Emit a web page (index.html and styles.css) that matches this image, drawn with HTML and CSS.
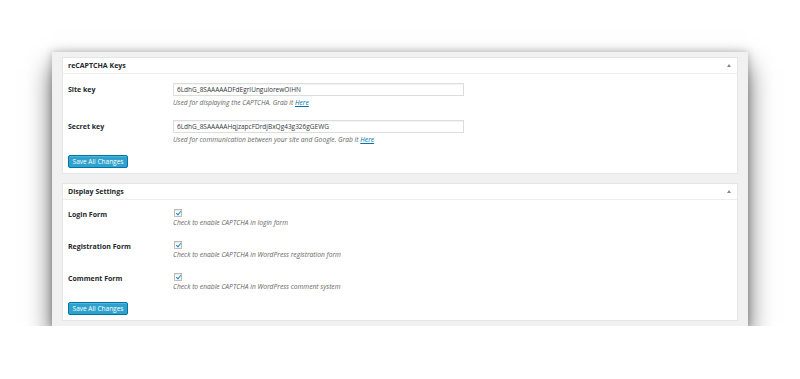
FILE: index.html
```html
<!DOCTYPE html>
<html>
<head>
    <title>reCAPTCHA Settings</title>
    <link rel="stylesheet" href="styles.css">
</head>
<body>
    <div class="wrap">
        <div class="postbox">
            <div class="postbox-header">
                <h3>reCAPTCHA Keys</h3>
                <span class="toggle"></span>
            </div>
            <div class="inside">
                <div class="row">
                    <div class="label">Site key</div>
                    <div class="field">
                        <input type="text" class="text-input" value="6LdhG_8SAAAAADFdEgrIUnguiorewOIHN">
                        <p class="description">Used for displaying the CAPTCHA. Grab it <a href="#">Here</a></p>
                    </div>
                </div>
                <div class="row">
                    <div class="label">Secret key</div>
                    <div class="field">
                        <input type="text" class="text-input" value="6LdhG_8SAAAAAHqjzapcFDrdjBxQg43g326gGEWG">
                        <p class="description">Used for communication between your site and Google. Grab it <a href="#">Here</a></p>
                    </div>
                </div>
                <button class="button-primary">Save All Changes</button>
            </div>
        </div>

        <div class="postbox">
            <div class="postbox-header">
                <h3>Display Settings</h3>
                <span class="toggle"></span>
            </div>
            <div class="inside">
                <div class="row check-row">
                    <div class="label">Login Form</div>
                    <div class="field">
                        <span class="checkbox"></span>
                        <p class="description">Check to enable CAPTCHA in login form</p>
                    </div>
                </div>
                <div class="row check-row">
                    <div class="label">Registration Form</div>
                    <div class="field">
                        <span class="checkbox"></span>
                        <p class="description">Check to enable CAPTCHA in WordPress registration form</p>
                    </div>
                </div>
                <div class="row check-row">
                    <div class="label">Comment Form</div>
                    <div class="field">
                        <span class="checkbox"></span>
                        <p class="description">Check to enable CAPTCHA in WordPress comment system</p>
                    </div>
                </div>
                <button class="button-primary">Save All Changes</button>
            </div>
        </div>
    </div>
</body>
</html>
```

FILE: styles.css
```css
body {
    font-family: "Open Sans", Arial, sans-serif;
    margin: 0;
    background: #fff;
    color: #32373c;
}
.wrap {
    width: 676px;
    margin: 52px 0 0 52px;
    padding: 5px 10px 5px;
    background: #f1f1f1;
    box-shadow: 0 14px 24px rgba(0,0,0,0.6), 0 0 8px rgba(0,0,0,0.25);
}
.postbox {
    background: #fff;
    border: 1px solid #e5e5e5;
    margin-bottom: 9px;
}
.postbox:last-child {
    margin-bottom: 0;
}
.postbox-header {
    display: flex;
    align-items: center;
    justify-content: space-between;
    height: 15px;
    padding: 0 6px 0 5px;
    border-bottom: 1px solid #eee;
}
.postbox-header h3 {
    margin: 0;
    font-size: 7px;
    font-weight: bold;
    color: #23282d;
}
.toggle {
    width: 0;
    height: 0;
    border-left: 2px solid transparent;
    border-right: 2px solid transparent;
    border-bottom: 3px solid #888;
}
.inside {
    padding: 9px 5px 5px;
}
.row {
    display: flex;
    margin-bottom: 12px;
}
.label {
    width: 105px;
    font-size: 7px;
    font-weight: bold;
    color: #23282d;
    line-height: 13px;
}
.field {
    flex: 1;
}
.text-input {
    display: block;
    width: 291px;
    height: 13px;
    box-sizing: border-box;
    border: 1px solid #ddd;
    padding: 0 3px;
    font-family: "Open Sans", Arial, sans-serif;
    font-size: 6.5px;
    color: #32373c;
    box-shadow: inset 0 1px 1px rgba(0,0,0,0.05);
}
.description {
    margin: 2px 0 0;
    font-size: 6.7px;
    font-style: italic;
    color: #666;
    line-height: 10px;
}
.description a {
    color: #0073aa;
}
.check-row {
    margin-bottom: 13px;
}
.check-row .label {
    line-height: 8px;
    padding-top: 2px;
}
.checkbox {
    display: block;
    width: 8px;
    height: 8px;
    margin-left: 1px;
    border: 1px solid #bbb;
    box-sizing: border-box;
    position: relative;
    box-shadow: inset 0 1px 1px rgba(0,0,0,0.1);
}
.checkbox::after {
    content: "";
    position: absolute;
    left: 2px;
    top: 0;
    width: 2px;
    height: 4px;
    border-right: 1px solid #1e8cbe;
    border-bottom: 1px solid #1e8cbe;
    transform: rotate(40deg);
}
.check-row .description {
    margin-top: 1px;
}
.button-primary {
    display: block;
    width: 60px;
    height: 13px;
    padding: 0;
    background: #2ea2cc;
    border: 1px solid #0074a2;
    border-radius: 2px;
    color: #fff;
    font-family: "Open Sans", Arial, sans-serif;
    font-size: 6.5px;
    box-shadow: inset 0 1px 0 rgba(120,200,230,0.5);
}
.inside .row:nth-last-of-type(1) {
    margin-bottom: 10px;
}
.check-row:nth-last-of-type(1) {
    margin-bottom: 12px;
}
```
